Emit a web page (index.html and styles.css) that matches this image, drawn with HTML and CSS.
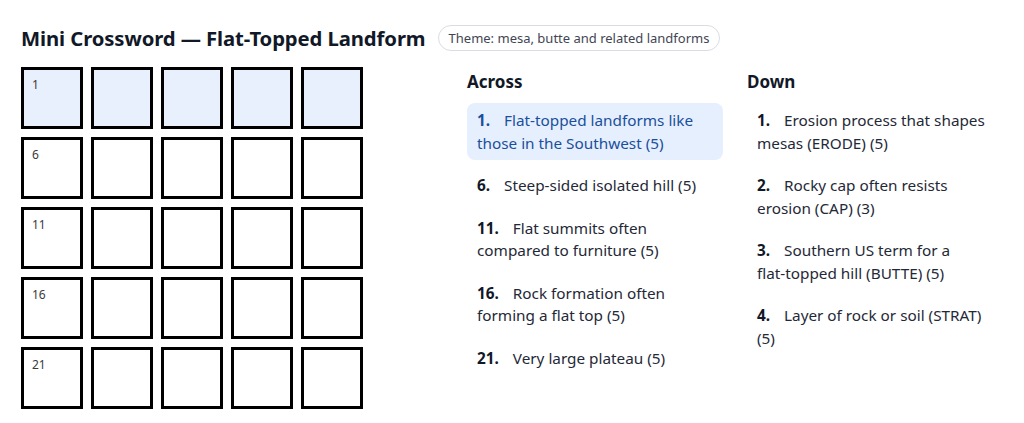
FILE: index.html
```html
<!DOCTYPE html>
<html lang="en">
<head>
  <meta charset="UTF-8">
  <meta name="viewport" content="width=device-width, initial-scale=1.0">
  <title>Mini Crossword — Flat-Topped Landform</title>
  <link rel="stylesheet" href="styles.css">
</head>
<body>
  <div class="page">
    <header class="header">
      <h1 class="title">Mini Crossword — Flat-Topped Landform</h1>
      <span class="badge">Theme: mesa, butte and related landforms</span>
    </header>

    <main class="layout">
      <div class="board">
        <div class="cell active"><span class="num">1</span></div>
        <div class="cell active"></div>
        <div class="cell active"></div>
        <div class="cell active"></div>
        <div class="cell active"></div>

        <div class="cell"><span class="num">6</span></div>
        <div class="cell"></div>
        <div class="cell"></div>
        <div class="cell"></div>
        <div class="cell"></div>

        <div class="cell"><span class="num">11</span></div>
        <div class="cell"></div>
        <div class="cell"></div>
        <div class="cell"></div>
        <div class="cell"></div>

        <div class="cell"><span class="num">16</span></div>
        <div class="cell"></div>
        <div class="cell"></div>
        <div class="cell"></div>
        <div class="cell"></div>

        <div class="cell"><span class="num">21</span></div>
        <div class="cell"></div>
        <div class="cell"></div>
        <div class="cell"></div>
        <div class="cell"></div>
      </div>

      <div class="clues">
        <section class="clueCol">
          <h2 class="clueHead">Across</h2>
          <ul class="clueList">
            <li class="clue current"><b>1.</b> Flat-topped landforms like those in the Southwest (5)</li>
            <li class="clue"><b>6.</b> Steep-sided isolated hill (5)</li>
            <li class="clue"><b>11.</b> Flat summits often compared to furniture (5)</li>
            <li class="clue"><b>16.</b> Rock formation often forming a flat top (5)</li>
            <li class="clue"><b>21.</b> Very large plateau (5)</li>
          </ul>
        </section>
        <section class="clueCol">
          <h2 class="clueHead">Down</h2>
          <ul class="clueList">
            <li class="clue"><b>1.</b> Erosion process that shapes mesas (ERODE) (5)</li>
            <li class="clue"><b>2.</b> Rocky cap often resists erosion (CAP) (3)</li>
            <li class="clue"><b>3.</b> Southern US term for a <span class="nowrap">flat-topped</span> hill (BUTTE) (5)</li>
            <li class="clue"><b>4.</b> Layer of rock or soil (STRAT) (5)</li>
          </ul>
        </section>
      </div>
    </main>
  </div>
</body>
</html>
```

FILE: styles.css
```css
body { margin: 0; padding: 0; background: #fff; color: #1f2937; font-family: "Noto Sans", "Open Sans", sans-serif; }
.page { padding: 22px 21px 0 21px; }

.header { display: flex; align-items: center; gap: 12px; height: 32px; }
.title { margin: 0; font-size: 20.3px; font-weight: 700; color: #111827; letter-spacing: -0.1px; }
.badge { border: 1px solid #d9dde3; border-radius: 999px; padding: 3px 10px; font-size: 13px; line-height: 18px; color: #3f4653; }

.layout { display: flex; justify-content: space-between; margin-top: 13px; }

.board { display: grid; grid-template-columns: repeat(5, 62px); grid-auto-rows: 62px; gap: 8px; }
.cell { box-sizing: border-box; border: 3px solid #000; background: #fff; padding: 7px 8px; }
.cell.active { background: #e8f0fe; }
.num { display: block; font-size: 12px; line-height: 15px; color: #3a3a3a; }

.clues { display: grid; grid-template-columns: 256px 256px; gap: 24px; }
.clueHead { margin: 3px 0 9px 0; font-size: 17px; font-weight: 700; color: #111827; line-height: 24px; }
.clueList { list-style: none; margin: 0; padding: 0; display: flex; flex-direction: column; gap: 8px; }
.clue { padding: 6px 10px; border-radius: 8px; font-size: 15.3px; line-height: 22.5px; color: #1f2937; }
.clue b { font-weight: 700; margin-right: 10px; color: #111827; }
.clue.current { background: #e6effd; color: #1a4f9c; }
.clue.current b { color: #1a4f9c; }
.nowrap { white-space: nowrap; }
```
